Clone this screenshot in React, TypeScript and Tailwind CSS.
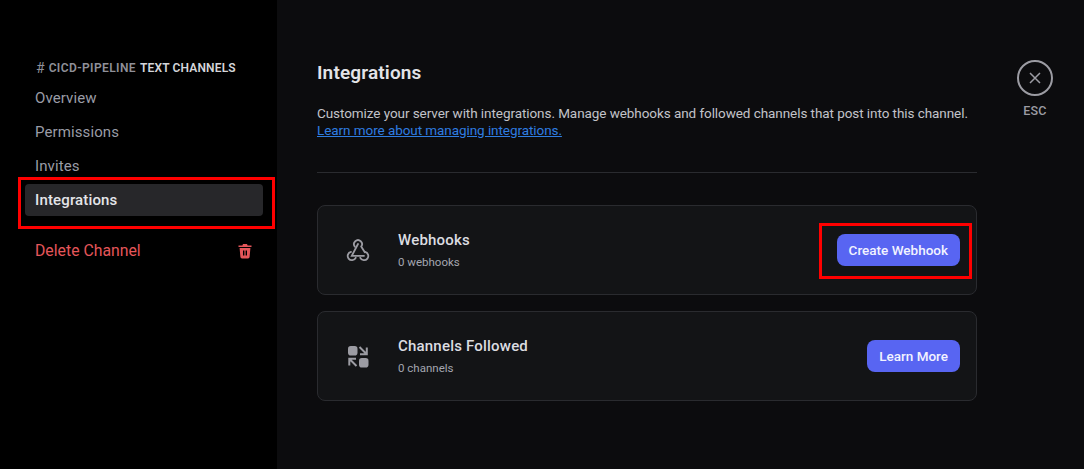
const font = "font-['Roboto','Liberation_Sans',sans-serif]";

function WebhookIcon() {
  return (
    <svg width="24" height="24" viewBox="0 0 24 24" fill="none" stroke="#9c9ca3" strokeWidth="1.8" strokeLinecap="round">
      <path d="M8.800 8.600A4 4 0 1 1 15.200 8.600L18.800 14.200" />
      <path d="M12 6L5.800 17.800H18" />
      <path d="M5 13.900A4.200 4.200 0 1 0 9.700 19.800" />
      <path d="M19 13.900A4.200 4.200 0 1 1 14.300 19.800" />
    </svg>
  );
}

function FollowedIcon() {
  return (
    <svg width="24" height="24" viewBox="0 0 24 24" fill="none">
      <rect x="2" y="2" width="9.500" height="9.500" rx="2.800" fill="#9c9ca3" />
      <rect x="13" y="14" width="9.500" height="9.500" rx="2.800" fill="#9c9ca3" />
      <path d="M13.500 3L20 9.500M20.800 3.500V10.300H14" stroke="#9c9ca3" strokeWidth="2" />
      <path d="M10.500 22L4 15.500M3.300 21.500V14.700H10" stroke="#9c9ca3" strokeWidth="2" />
    </svg>
  );
}

function TrashIcon() {
  return (
    <svg width="16" height="16" viewBox="0 0 16 16" fill="#e5565a">
      <path d="M6 1h4l.6 1.400H14.500v1.600h-13V2.400h3.900z" />
      <path fillRule="evenodd" d="M2.600 5h10.800l-.8 9a1.600 1.600 0 0 1-1.600 1.400H5a1.600 1.600 0 0 1-1.600-1.400zM6 7.500v5h1.400v-5zm2.600 0v5H10v-5z" />
    </svg>
  );
}

function NavItem({ label }: { label: string }) {
  return <div className="h-[32px] px-[10px] flex items-center text-[15px] tracking-[0.1px] text-[#9a9ca6]">{label}</div>;
}

function Card({ icon, title, sub, action }: { icon: React.ReactNode; title: string; sub: string; action: string }) {
  return (
    <div className="h-[90px] rounded-lg border border-[#2a2b2f] bg-[#131416] flex items-center pl-[28px] pr-[16px]">
      <div className="w-[24px] h-[24px] mr-[28px]">{icon}</div>
      <div className="flex-1">
        <div className="text-[15px] leading-[20px] tracking-[0.2px] font-medium text-[#dcdde1]">{title}</div>
        <div className="text-[11.5px] leading-[16px] mt-[4px] text-[#a4a6b0]">{sub}</div>
      </div>
      <button className="h-[32px] px-[12px] rounded-lg bg-[#5865f2] text-[#f2f3ff] text-[13.5px] font-medium">{action}</button>
    </div>
  );
}

export default function App() {
  return (
    <div className={`relative flex h-[469px] overflow-hidden bg-[#0c0c0e] ${font}`}>
      <aside className="w-[277px] shrink-0 bg-black pl-[25px] pr-[14px] pt-[60px]">
        <div className="px-[11px] h-[16px] flex items-center text-[12px] font-semibold whitespace-nowrap">
          <span className="text-[14px] font-normal text-[#8f9099] mr-[4px]">#</span>
          <span className="text-[#8f9099] tracking-[0.4px] mr-[4px]">CICD-PIPELINE</span>
          <span className="text-[#d4d5da] tracking-[0.15px]">TEXT CHANNELS</span>
        </div>
        <div className="mt-[6px] flex flex-col gap-[2px]">
          <NavItem label="Overview" />
          <NavItem label="Permissions" />
          <NavItem label="Invites" />
          <div className="h-[32px] px-[10px] flex items-center rounded bg-[#27272a] text-[15px] tracking-[0.15px] font-medium text-[#e4e5e9]">Integrations</div>
        </div>
        <div className="mt-[19px] h-[32px] px-[10px] flex items-center justify-between text-[15.8px] text-[#e5565a]">
          <span>Delete Channel</span>
          <TrashIcon />
        </div>
      </aside>

      <main className="flex-1 pl-[40px] pt-[60px] flex items-start">
        <div className="w-[660px]">
          <h1 className="text-[19px] leading-[26px] tracking-[0.15px] font-semibold text-[#e3e4e8]">Integrations</h1>
          <p className="mt-[19px] text-[13.5px] leading-[17px] tracking-[-0.07px] text-[#c2c3c9]">
            Customize your server with integrations. Manage webhooks and followed channels that post into this channel.
            <a className="block text-[#2f7de1] underline">Learn more about managing integrations.</a>
          </p>
          <div className="mt-[33px] border-t border-[#2a2b2f]" />
          <div className="mt-[32px] flex flex-col gap-[16px]">
            <Card icon={<WebhookIcon />} title="Webhooks" sub="0 webhooks" action="Create Webhook" />
            <Card icon={<FollowedIcon />} title="Channels Followed" sub="0 channels" action="Learn More" />
          </div>
        </div>
        <div className="ml-[40px] flex flex-col items-center">
          <div className="w-[36px] h-[36px] rounded-full border-2 border-[#9c9ca3] flex items-center justify-center">
            <svg width="14" height="14" viewBox="0 0 14 14" stroke="#9c9ca3" strokeWidth="1.5">
              <path d="M2 2l10 10M12 2L2 12" />
            </svg>
          </div>
          <div className="mt-[7px] text-[12.5px] leading-[16px] tracking-[0.2px] font-medium text-[#9c9ca3]">ESC</div>
        </div>
      </main>

      <div className="absolute left-[18px] top-[177px] w-[257px] h-[52px] border-[3px] border-[#ff0000]" />
      <div className="absolute left-[819px] top-[223px] w-[153px] h-[56px] border-[3px] border-[#ff0000]" />
    </div>
  );
}
